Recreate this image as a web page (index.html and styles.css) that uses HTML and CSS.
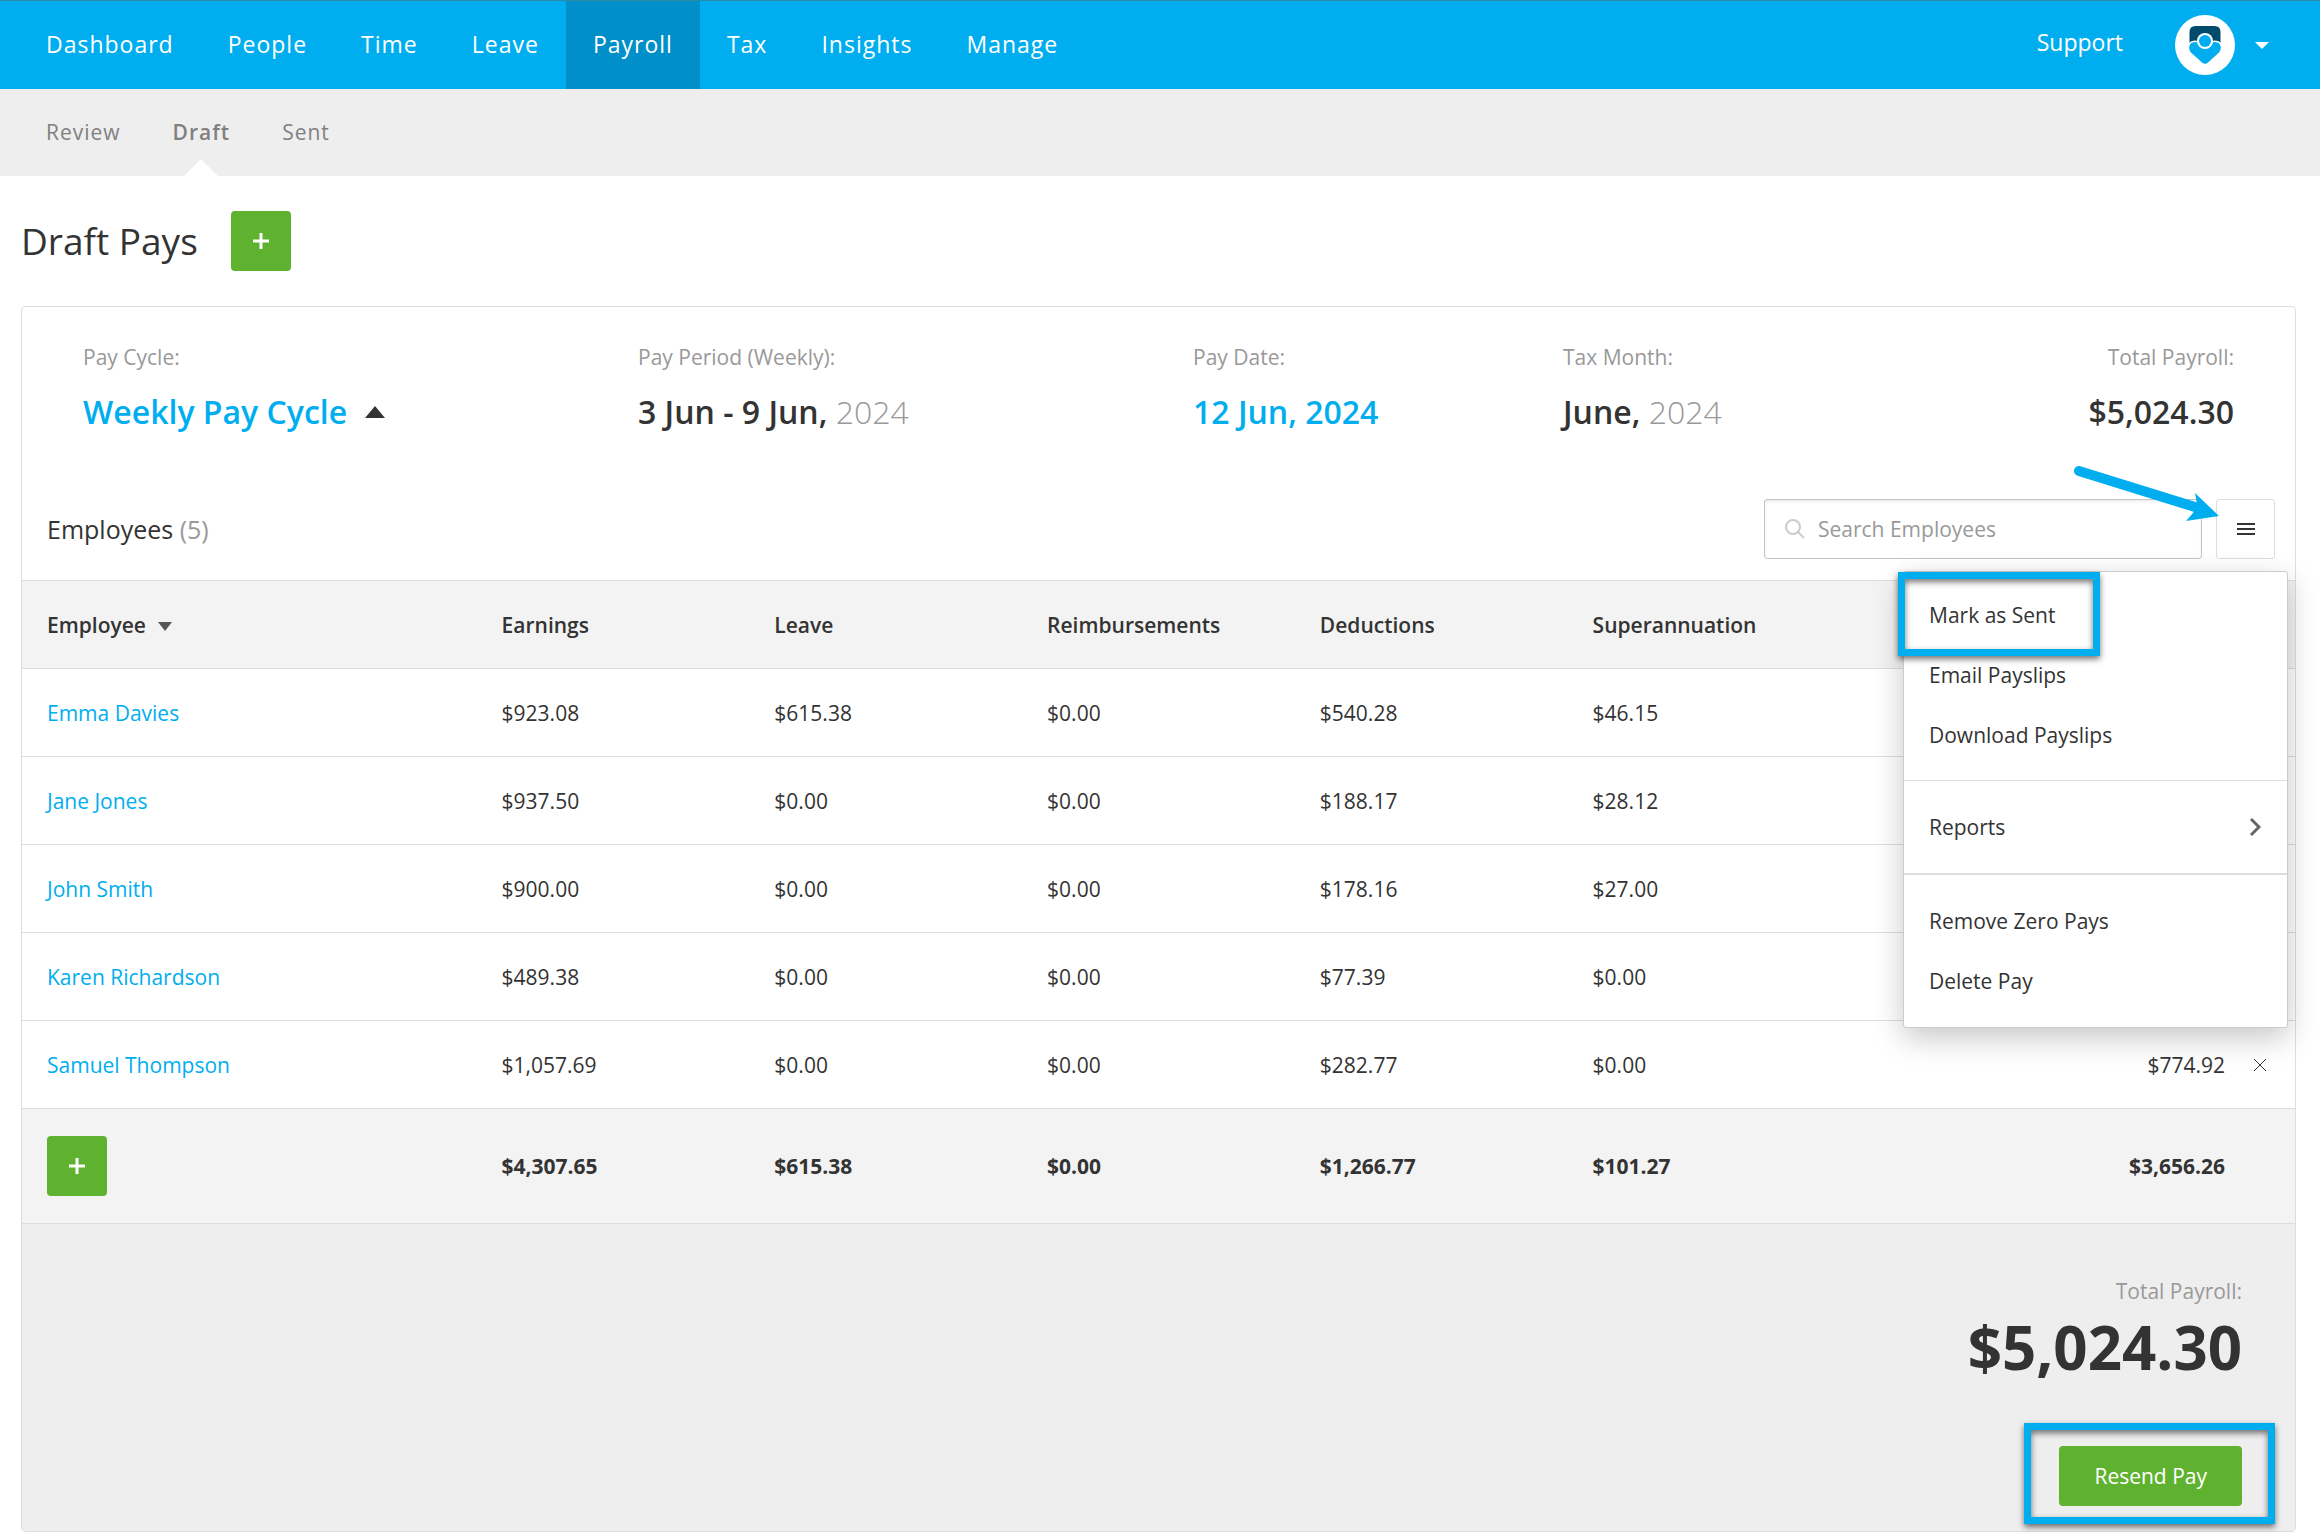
FILE: index.html
```html
<!DOCTYPE html>
<html lang="en">
<head>
<meta charset="utf-8">
<title>Draft Pays</title>
<link rel="stylesheet" href="styles.css">
</head>
<body>
<header class="topbar">
  <nav class="main-nav" aria-label="Main">
    <a href="#">Dashboard</a>
    <a href="#">People</a>
    <a href="#">Time</a>
    <a href="#">Leave</a>
    <a href="#" class="active" aria-current="page">Payroll</a>
    <a href="#">Tax</a>
    <a href="#">Insights</a>
    <a href="#">Manage</a>
  </nav>
  <div class="account">
    <a href="#" class="support">Support</a>
    <button type="button" class="account-button" aria-label="Account">
      <svg class="avatar" viewBox="0 0 60 60" aria-hidden="true">
        <circle cx="30" cy="30" r="30" fill="#fff"/>
        <path d="M14.500 29V17q0-6 6-6h19q6 0 6 6v12z" fill="#004b6b"/>
        <path d="M16 37.500C13 34 14 28.500 17.500 27.500C20 26.500 22 27 23 28L30 31L37 28C38 27 40 26.500 42.500 27.500C46 28.500 47 34 44 37.500L33 47.500Q30 50 27 47.500Z" fill="#00aeef" stroke="#fff" stroke-width="3" paint-order="stroke"/>
        <circle cx="30" cy="26" r="8" fill="#fff"/>
        <circle cx="30" cy="26" r="6" fill="#00aeef"/>
      </svg>
      <svg class="caret" viewBox="0 0 14 7" aria-hidden="true"><path d="M0 0h14L7 7z" fill="#fff"/></svg>
    </button>
  </div>
</header>
<nav class="sub-nav" aria-label="Payroll">
  <a href="#">Review</a>
  <a href="#" class="current" aria-current="page">Draft</a>
  <a href="#">Sent</a>
</nav>
<main class="page">
  <div class="title-row">
    <h1>Draft Pays</h1>
    <button type="button" class="button add" aria-label="Add pay"><svg viewBox="0 0 16 16" aria-hidden="true"><path d="M8 0v16M0 8h16"/></svg></button>
  </div>
  <section class="card">
    <dl class="summary">
      <div><dt>Pay Cycle:</dt><dd><a href="#">Weekly Pay Cycle</a><svg class="up" viewBox="0 0 20 12" aria-hidden="true"><path d="M0 12 10 0l10 12z" fill="#333"/></svg></dd></div>
      <div><dt>Pay Period (Weekly):</dt><dd>3 Jun - 9 Jun, <span class="year">2024</span></dd></div>
      <div><dt>Pay Date:</dt><dd><a href="#">12 Jun, 2024</a></dd></div>
      <div><dt>Tax Month:</dt><dd>June, <span class="year">2024</span></dd></div>
      <div class="total"><dt>Total Payroll:</dt><dd>$5,024.30</dd></div>
    </dl>
    <div class="toolbar">
      <h2>Employees <span>(5)</span></h2>
      <label class="search">
        <svg viewBox="0 0 20 20" aria-hidden="true"><circle cx="8" cy="8" r="7"/><path d="m13 13 6 6"/></svg>
        <input type="search" placeholder="Search Employees" aria-label="Search Employees">
      </label>
      <div class="actions">
        <button type="button" class="menu-button" aria-label="Actions" aria-expanded="true"><svg viewBox="0 0 18 14" aria-hidden="true"><path d="M0 2h18M0 7h18M0 12h18"/></svg></button>
        <div class="menu">
          <div class="group">
            <button type="button">Mark as Sent</button>
            <button type="button">Email Payslips</button>
            <button type="button">Download Payslips</button>
          </div>
          <div class="group">
            <button type="button">Reports<svg viewBox="0 0 12 20" aria-hidden="true"><path d="m2 2 8 8-8 8"/></svg></button>
          </div>
          <div class="group strong">
            <button type="button">Remove Zero Pays</button>
            <button type="button">Delete Pay</button>
          </div>
          <span class="highlight sent-highlight"></span>
        </div>
        <svg class="arrow" viewBox="0 0 152 66" aria-hidden="true"><path d="M10 11 126 47" stroke="#00aeef" stroke-width="10" stroke-linecap="round"/><path d="M150 56 126 33l2 11-4 9-7 8z" fill="#00aeef"/></svg>
      </div>
    </div>
    <table class="pays">
      <thead>
        <tr><th scope="col">Employee<svg class="sort" viewBox="0 0 14 9" aria-hidden="true"><path d="M0 0h14L7 9z" fill="#555"/></svg></th><th scope="col">Earnings</th><th scope="col">Leave</th><th scope="col">Reimbursements</th><th scope="col">Deductions</th><th scope="col">Superannuation</th><td></td></tr>
      </thead>
      <tbody>
        <tr><td><a href="#">Emma Davies</a></td><td>$923.08</td><td>$615.38</td><td>$0.00</td><td>$540.28</td><td>$46.15</td><td></td></tr>
        <tr><td><a href="#">Jane Jones</a></td><td>$937.50</td><td>$0.00</td><td>$0.00</td><td>$188.17</td><td>$28.12</td><td></td></tr>
        <tr><td><a href="#">John Smith</a></td><td>$900.00</td><td>$0.00</td><td>$0.00</td><td>$178.16</td><td>$27.00</td><td></td></tr>
        <tr><td><a href="#">Karen Richardson</a></td><td>$489.38</td><td>$0.00</td><td>$0.00</td><td>$77.39</td><td>$0.00</td><td></td></tr>
        <tr><td><a href="#">Samuel Thompson</a></td><td>$1,057.69</td><td>$0.00</td><td>$0.00</td><td>$282.77</td><td>$0.00</td><td><div class="net">$774.92<button type="button" class="remove" aria-label="Remove"><svg viewBox="0 0 14 14" aria-hidden="true"><path d="m1 1 12 12M13 1 1 13"/></svg></button></div></td></tr>
      </tbody>
      <tfoot>
        <tr><td><button type="button" class="button add" aria-label="Add employee"><svg viewBox="0 0 16 16" aria-hidden="true"><path d="M8 0v16M0 8h16"/></svg></button></td><td>$4,307.65</td><td>$615.38</td><td>$0.00</td><td>$1,266.77</td><td>$101.27</td><td class="net-total">$3,656.26</td></tr>
      </tfoot>
    </table>
    <footer class="card-footer">
      <p class="footer-label">Total Payroll:</p>
      <p class="footer-total">$5,024.30</p>
      <div class="resend">
        <button type="button" class="button">Resend Pay</button>
        <span class="highlight resend-highlight"></span>
      </div>
    </footer>
  </section>
</main>
</body>
</html>
```
FILE: styles.css
```css
* { box-sizing: border-box; }

body {
  margin: 0;
  background: #fff;
  color: #333;
  font: 21px/30px "Open Sans", "Noto Sans", sans-serif;
}

a { color: #00aeef; text-decoration: none; }
button, input { font: inherit; color: inherit; }
button { padding: 0; border: 0; background: none; cursor: pointer; }
svg { display: block; fill: none; }
h1, h2, p, dl, dd { margin: 0; }

.topbar {
  display: flex;
  justify-content: space-between;
  height: 89px;
  padding: 0 51px 0 19px;
  border-top: 1px solid #2c8ba3;
  background: #00aeef;
}
.main-nav { display: flex; font-size: 23px; letter-spacing: 1px; }
.main-nav a { display: flex; align-items: center; padding: 0 27px 2px; color: #fff; }
.main-nav .active { background: #008fc8; }
.account { display: flex; align-items: center; gap: 52px; }
.support { padding-bottom: 6px; color: #fff; font-size: 23px; }
.account-button { display: flex; align-items: center; gap: 20px; }
.avatar { width: 60px; height: 60px; }
.caret { width: 14px; height: 7px; }

.sub-nav {
  display: flex;
  gap: 52px;
  height: 87px;
  padding: 0 46px;
  background: #eee;
  letter-spacing: 1px;
}
.sub-nav a { position: relative; display: flex; align-items: center; padding-bottom: 2px; color: #808080; }
.sub-nav .current { font-weight: 600; }
.sub-nav .current::after {
  content: "";
  position: absolute;
  bottom: 0;
  left: calc(50% - 17px);
  border: solid transparent;
  border-width: 0 17px 17px;
  border-bottom-color: #fff;
}

.page { padding: 35px 24px 8px 21px; }
.title-row { display: flex; align-items: center; gap: 33px; margin-bottom: 35px; }
h1 { font-size: 37px; line-height: 48px; font-weight: 400; }

.button {
  height: 60px;
  padding: 0 35px;
  border-radius: 4px;
  background: #5fb22f;
  color: #fff;
}
.add { display: flex; align-items: center; justify-content: center; width: 60px; padding: 0; }
.add svg { width: 16px; height: 16px; stroke: #fff; stroke-width: 3; }

.card { border: 1px solid #ddd; border-radius: 4px; }

.summary {
  display: grid;
  grid-template-columns: 555fr 555fr 370fr 370fr 301fr;
  padding: 35px 61px 65px;
}
.summary dt { margin-bottom: 18px; color: #999; }
.summary dd {
  display: flex;
  align-items: center;
  font-size: 32px;
  line-height: 44px;
  font-weight: 600;
  white-space: pre;
}
.summary .total { text-align: right; }
.summary .total dd { justify-content: flex-end; }
.year { color: #999; font-weight: 300; }
.up { width: 20px; height: 12px; margin-left: 18px; }

.toolbar { display: flex; align-items: center; padding: 0 20px 21px 25px; }
h2 { flex: 1; font-size: 25px; font-weight: 400; }
h2 span { color: #999; }
.search {
  display: flex;
  align-items: center;
  gap: 13px;
  width: 438px;
  height: 60px;
  margin-right: 14px;
  padding: 0 20px;
  border: 1px solid #c4c4c4;
  border-radius: 3px;
  box-shadow: inset 0 2px 3px #eee;
}
.search svg { width: 20px; height: 20px; stroke: #ccc; stroke-width: 2; }
.search input { flex: 1; min-width: 0; padding: 0; border: 0; background: none; outline: 0; }
.search input::placeholder { color: #999; opacity: 1; }

.actions { position: relative; }
.menu-button {
  display: flex;
  align-items: center;
  justify-content: center;
  width: 59px;
  height: 60px;
  border: 1px solid #ddd;
  border-radius: 3px;
}
.menu-button svg { width: 18px; height: 14px; stroke: #333; stroke-width: 2; }
.menu {
  position: absolute;
  z-index: 1;
  top: 72px;
  right: -13px;
  width: 385px;
  border: 1px solid #ccc;
  border-radius: 3px;
  background: #fff;
  box-shadow: 0 10px 30px rgba(0, 0, 0, .22);
}
.group { padding: 16px 0; }
.group:first-child { padding: 13px 0 15px; }
.group:last-child { padding: 15px 0 14px; }
.group + .group { border-top: 1px solid #ddd; }
.group + .strong { border-top-width: 2px; }
.group button {
  display: flex;
  align-items: center;
  justify-content: space-between;
  width: 100%;
  height: 60px;
  padding: 0 26px 0 25px;
}
.group svg { width: 12px; height: 20px; stroke: #666; stroke-width: 3; }
.arrow { position: absolute; z-index: 2; top: -39px; left: -147px; width: 152px; height: 66px; }

.highlight {
  position: absolute;
  border: 7px solid #00aeef;
  box-shadow: 0 3px 6px rgba(0, 0, 0, .55), inset 0 3px 6px rgba(0, 0, 0, .55);
  pointer-events: none;
}
.sent-highlight { top: 0; left: -6px; width: 202px; height: 84px; }

.pays { width: 100%; border-collapse: collapse; table-layout: fixed; }
.pays tr { height: 88px; border-top: 1px solid #ddd; }
.pays th, .pays td { width: 12%; padding: 0 0 0 25px; text-align: left; }
.pays tr > :first-child, .pays tr > :last-child { width: 20%; }
.pays th { font-weight: 600; }
.pays thead, .pays tfoot { background: #f3f3f3; }
.pays tfoot tr { height: 114px; font-weight: 700; }
.sort { display: inline-block; width: 14px; height: 9px; margin-left: 12px; vertical-align: 2px; }
.net { display: flex; align-items: center; justify-content: flex-end; gap: 28px; padding-right: 28px; }
.remove svg { width: 14px; height: 14px; stroke: #333; stroke-width: 1; }
.pays .net-total { padding-right: 70px; text-align: right; }

.card-footer {
  display: flex;
  flex-direction: column;
  align-items: flex-end;
  padding: 52px 53px 25px;
  border-top: 1px solid #ddd;
  background: #eee;
}
.footer-label { color: #999; }
.footer-total { margin: 5px 0 63px; font-size: 60px; line-height: 72px; font-weight: 700; }
.resend { position: relative; }
.resend-highlight { top: -23px; right: -33px; bottom: -18px; left: -35px; }
```
